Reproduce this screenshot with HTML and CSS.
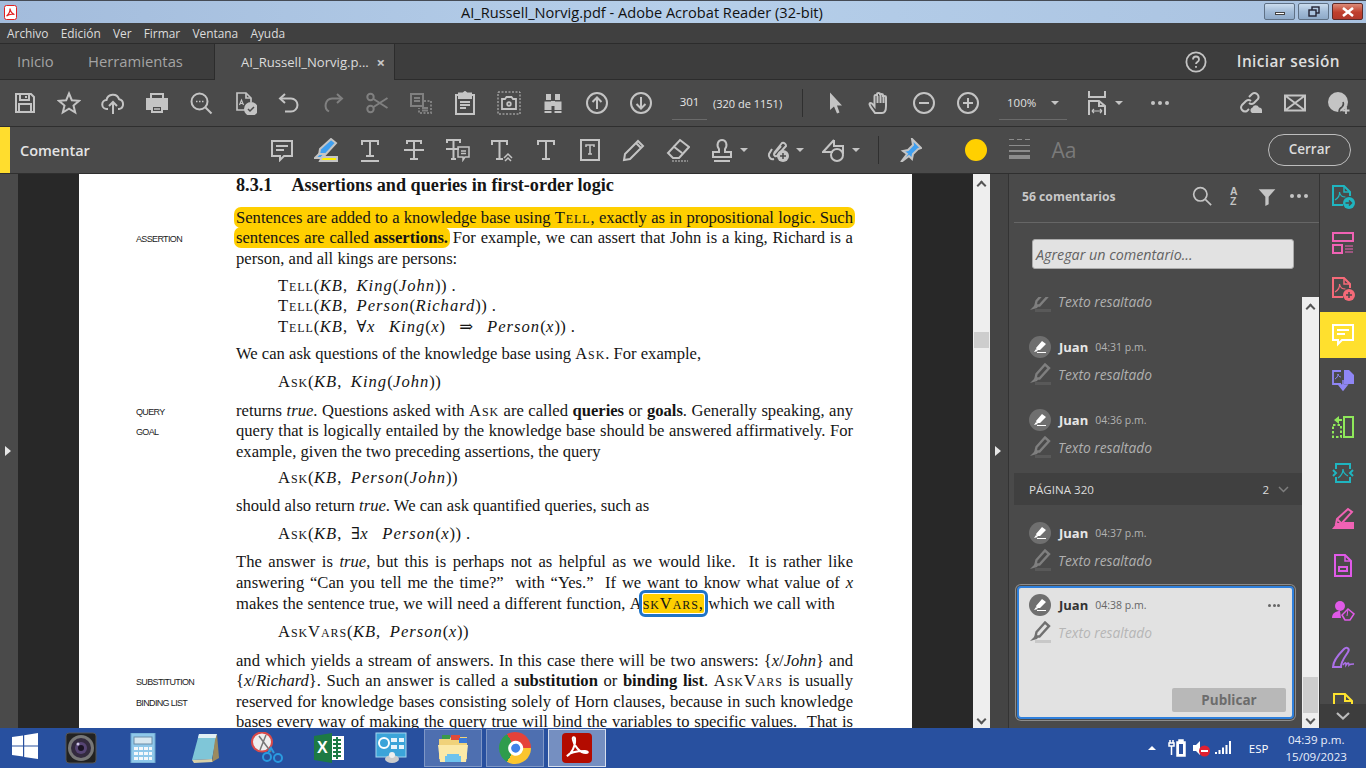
FILE: index.html
```html
<!DOCTYPE html>
<html>
<head>
<meta charset="utf-8">
<title>AI_Russell_Norvig.pdf - Adobe Acrobat Reader (32-bit)</title>
<link rel="stylesheet" href="styles.css">
</head>
<body>

<div class="titlebar">
  <svg class="app-ico" width="13" height="15" viewBox="0 0 13 15"><rect x="0.5" y="0.5" width="12" height="14" rx="2" fill="#fff" stroke="#e02020"/><path d="M2.5 11c2-1 4-5 3.5-7.5C6 5.500 8 9 10.500 9.500 8 9 4.500 9.500 2.500 11z" fill="none" stroke="#e02020" stroke-width="1.200"/></svg>
  <div class="title-text">AI_Russell_Norvig.pdf - Adobe Acrobat Reader (32-bit)</div>
  <div class="winbtns">
    <div class="winbtn"><span class="win-min"></span></div>
    <div class="winbtn"><svg width="12" height="11" viewBox="0 0 12 11" fill="none" stroke="#223" stroke-width="1.400"><rect x="4" y="1" width="7" height="6"/><rect x="1" y="4" width="7" height="6" fill="#a9c2de"/></svg></div>
    <div class="winbtn win-close"><svg width="14" height="10" viewBox="0 0 14 10" stroke="#fff" stroke-width="2.600"><path d="M2 1l10 8M12 1L2 9"/></svg></div>
  </div>
</div>

<div class="menubar">
  <span>Archivo</span><span>Edición</span><span>Ver</span><span>Firmar</span><span>Ventana</span><span>Ayuda</span>
</div>

<div class="tabs">
  <span class="tab-link first">Inicio</span>
  <span class="tab-link">Herramientas</span>
  <div class="tab-doc"><span>AI_Russell_Norvig.p...</span><b>×</b></div>
  <svg class="help" width="22" height="22" viewBox="0 0 22 22" fill="none" stroke="#c4c4c4" stroke-width="1.800"><circle cx="11" cy="11" r="9.600"/><path d="M8 8.500c0-4 6-4 6 0 0 2.500-3 2.500-3 4.500"/><path d="M11 15v1.800"/></svg>
  <span class="login">Iniciar sesión</span>
</div>

<div class="toolbar">
  <div class="cell"><svg class="ic" viewBox="0 0 24 24"><path d="M3 3h15l3 3v15H3z"/><path d="M7 3v6h9V3M6 21v-8h12v8"/><path d="M13 5v2"/></svg></div>
  <div class="cell"><svg class="ic" viewBox="0 0 24 24"><path d="M12 2.500l2.800 6.700 7.200.6-5.500 4.700 1.700 7-6.200-3.800-6.200 3.800 1.700-7L2 9.800l7.200-.6z"/></svg></div>
  <div class="cell"><svg class="ic" viewBox="0 0 24 24"><path d="M7 18H6a4.500 4.500 0 0 1-.5-9 6.500 6.500 0 0 1 12.600-.8A5 5 0 0 1 18 18h-1"/><path d="M12 23V11M8 15l4-4 4 4"/></svg></div>
  <div class="cell"><svg class="ic" viewBox="0 0 24 24"><path class="solid" d="M2 8h20a1 1 0 0 1 0 0v10h-4v-4H6v4H2z"/><path d="M6 7V3h12v4M7 15h10v6H7z"/><path d="M9 18h6" stroke-width="1.500"/></svg></div>
  <div class="cell"><svg class="ic" viewBox="0 0 24 24"><circle cx="10.500" cy="10.500" r="8"/><path d="M16.500 16.500l6 6"/><path d="M7 10.500h1.500M10 10.500h1.500M13 10.500h1.500" stroke-width="1.500"/></svg></div>
  <div class="cell"><svg class="ic" viewBox="0 0 24 24"><path d="M15 19H4V2h9l5 5v4" stroke-width="1.700"/><path d="M13 2v5h5" stroke-width="1.700"/><circle class="solid" cx="18" cy="18" r="6"/><path d="M15 18l2 2 4-4" stroke="#4a4a4a" stroke-width="1.500"/><path d="M6.500 14l2-5 2 5M7 12.500h3" stroke-width="1.200"/></svg></div>
  <div class="cell"><svg class="ic" viewBox="0 0 24 24"><path d="M8 3L3 7.500 8 12"/><path d="M3 7.500h11a6.500 6.500 0 0 1 0 13H8"/></svg></div>
  <div class="cell dim"><svg class="ic" viewBox="0 0 24 24"><path d="M16 3l5 4.500L16 12"/><path d="M21 7.500H11a7 7 0 0 0-3 13"/></svg></div>
  <div class="cell dim"><svg class="ic" viewBox="0 0 24 24"><circle cx="5.500" cy="6" r="3.200"/><circle cx="5.500" cy="18" r="3.200"/><path d="M8.500 8l14 9M8.500 16l14-9"/></svg></div>
  <div class="cell dim"><svg class="ic" viewBox="0 0 24 24" stroke-width="1.400"><path d="M2 3h12v12H2zM5 7h6M5 10h6"/><path d="M15 10h7v12H10v-5" stroke-dasharray="2 1.500"/><path d="M13 17h6M13 19.500h6"/></svg></div>
  <div class="cell"><svg class="ic" viewBox="0 0 24 24" stroke-width="1.700"><path d="M5 4H3v19h18V4h-2"/><path d="M6 7V2.500h4l2-1.500 2 1.500h4V7z" class="solid"/><path d="M7 11h10M7 14h10M7 17h6"/></svg></div>
  <div class="cell"><svg class="ic" viewBox="0 0 24 24" stroke-width="1.500"><path d="M1 1h22v22H1z" stroke-dasharray="2 1.500" stroke-width="1"/><path d="M5 8h3l1.500-2h5L16 8h3v10H5z" stroke-width="1.800"/><circle cx="12" cy="13" r="1.800" stroke-width="1.800"/></svg></div>
  <div class="cell"><svg class="ic solidfill" viewBox="0 0 24 24"><path d="M5 3h5v6H5zM14 3h5v6h-5zM3.500 10.500h7V19h-7zM13.500 10.500h7V19h-7zM10 10h4v5h-4zM3.500 20h7v2h-7zM13.500 20h7v2h-7z"/></svg></div>
  <div class="cell"><svg class="ic" viewBox="0 0 24 24"><circle cx="12" cy="12" r="10"/><path d="M12 18V7M7.500 11L12 6.500l4.500 4.500"/></svg></div>
  <div class="cell"><svg class="ic" viewBox="0 0 24 24"><circle cx="12" cy="12" r="10"/><path d="M12 6v11M7.500 13l4.500 4.500 4.500-4.500"/></svg></div>

  <div class="pagebox">301</div>
  <div class="pagecount">(320 de 1151)</div>
  <div class="tb-sep"></div>

  <div class="cell"><svg class="ic solidfill" viewBox="0 0 24 24"><path d="M6 1.500l12 13h-5l2.500 7-2.500 1-3-7-4 3.500z"/></svg></div>
  <div class="cell"><svg class="ic" viewBox="0 0 24 24" stroke-width="1.700"><path d="M7 22c-2-3-5-6-5.500-9 0-1.500 2-1.500 3 0l2 2.500V5c0-1.500 2.500-1.500 2.500 0V3c0-1.500 3-1.500 3 0v1c0-1.500 3-1.500 3 0v2c0-1.500 3-1.500 3 0v9c0 4-1.500 7-4 7z"/><path d="M9.500 5v7M12.500 4v8M15.500 6v6"/></svg></div>
  <div class="cell"><svg class="ic" viewBox="0 0 24 24"><circle cx="12" cy="12" r="10"/><path d="M7 12h10"/></svg></div>
  <div class="cell"><svg class="ic" viewBox="0 0 24 24"><circle cx="12" cy="12" r="10"/><path d="M7 12h10M12 7v10"/></svg></div>

  <div class="zoombox"><span>100%</span><i class="caret"></i></div>

  <div class="fit"><svg class="ic" viewBox="0 0 24 24" stroke-width="1.700"><path d="M4 0v6h16V0"/><path d="M4 24V10h10l6 5v9"/><path d="M14 10v5h6"/><path d="M7 20h10M7 20l2-2M7 20l2 2M17 20l-2-2M17 20l-2 2" stroke-width="1.200"/></svg><i class="caret"></i></div>
  <div class="dots3 more"><i></i><i></i><i></i></div>

  <div class="tb-right">
    <div class="cell"><svg class="ic" viewBox="0 0 24 24"><path d="M10 6l3-3a4 4 0 0 1 6 5l-4 4a4 4 0 0 1-5 0"/><path d="M12 10a4 4 0 0 0-5 0l-4 4a4 4 0 0 0 5 6l2-2"/><path class="solid" d="M13 22a3 3 0 0 1 .5-5.500 3.500 3.500 0 0 1 6.500 0 3 3 0 0 1 3 2.800V22z" stroke="none"/></svg></div>
    <div class="cell"><svg class="ic" viewBox="0 0 24 24" stroke-width="1.600"><path d="M2 4.500h20v15H2zM2 4.500l20 15M22 4.500l-20 15"/></svg></div>
    <div class="cell"><svg class="ic" viewBox="0 0 24 24"><circle class="solid" cx="11" cy="11" r="10" stroke="none"/><path d="M12 21c0-3 1-4 3-5 1-1 2-3 1-5" stroke="#4a4a4a" stroke-width="1.500"/><path d="M19 16v7M15.500 19.500h7" stroke-width="1.800"/></svg></div>
  </div>
</div>

<div class="commentbar">
  <div class="cm-flag"></div>
  <div class="cm-title">Comentar</div>
  <div class="cell"><svg class="ic" viewBox="0 0 24 24"><path d="M2 3h20v15h-8l-4 4v-4H2z"/><path d="M6 8h12M6 12h8"/></svg></div>
  <div class="cell"><svg class="ic" viewBox="0 0 24 24" stroke="none"><path d="M17 1l5 4L11 17H5l1-6z" fill="#3f9ff0"/><path d="M5 16h5l-2 4H1z" fill="#3f9ff0"/><path d="M8 19h15v4H6z" fill="#ffef00"/></svg></div>
  <div class="cell"><svg class="ic" viewBox="0 0 24 24"><path d="M4 7V3h16v4M12 3v15M8 18h8M3 23h18"/></svg></div>
  <div class="cell"><svg class="ic" viewBox="0 0 24 24"><path d="M5 6V3h14v3M12 3v18M8 21h8M2 12h20"/></svg></div>
  <div class="cell"><svg class="ic" viewBox="0 0 24 24"><path d="M1 5V2h13v3M7.500 2v19M5 21h5M0 11h13"/><path d="M12 9h11v10h-4l-2 3v-3h-5zM15 13h5M15 15.500h5" stroke-width="1.500"/></svg></div>
  <div class="cell"><svg class="ic" viewBox="0 0 24 24"><path d="M2 7V3h15v4M9.500 3v18M6 21h7"/><path d="M14 20l4-4 4 4M15 23l3-3 3 3" stroke-width="1.500"/></svg></div>
  <div class="cell"><svg class="ic" viewBox="0 0 24 24"><path d="M4 7V3h16v4M12 3v18M8 21h8"/></svg></div>
  <div class="cell"><svg class="ic" viewBox="0 0 24 24"><path d="M3 2h18v20H3z"/><path d="M8 9V7h8v2M12 7v9M10 16h4" stroke-width="1.600"/></svg></div>
  <div class="cell"><svg class="ic" viewBox="0 0 24 24"><path d="M16 3l5 5L8 21l-6 1 1-6zM14 5l5 5"/></svg></div>
  <div class="cell"><svg class="ic" viewBox="0 0 24 24"><path d="M14 2l9 7-10 11H7l-5-5zM7 8l9 7"/><path d="M6 23h16" stroke-dasharray="2 1" stroke-width="1"/></svg></div>
  <div class="cell drop stamp"><svg class="ic" viewBox="0 0 24 24"><path d="M9 11C6 7 8 2 12 2s6 5 3 9v3h6v5H3v-5h6zM4 23h16"/></svg><i class="caret"></i></div>
  <div class="cell drop"><svg class="ic" viewBox="0 0 24 24"><path d="M8 15L16 5a3 3 0 0 1 4 3L11 18a2 2 0 0 1-3-2l7-8"/><path d="M6 11l-3 5a4 4 0 0 0 5 5"/><circle class="solid" cx="17" cy="18" r="6" stroke="none"/><path d="M14 18h6M17 15v6" stroke="#4a4a4a" stroke-width="1.500"/></svg><i class="caret"></i></div>
  <div class="cell drop"><svg class="ic" viewBox="0 0 24 24"><path d="M12 2L1 14h10"/><path d="M12 2v6h9v8"/><circle cx="15" cy="17" r="6"/></svg><i class="caret"></i></div>
  <div class="tb-sep cm-sep"></div>
  <div class="cell pin"><svg class="ic" viewBox="0 0 24 24" stroke="none"><path d="M14 1l9 9-3 1-5 5-1 5-3-3-8 6 6-8-4-3 5-1 5-5z" fill="#3f9ff0"/></svg></div>
  <div class="color-dot"></div>
  <div class="cell lines"><svg width="22" height="22" viewBox="0 0 22 22" fill="#8c8c8c"><path d="M0 0h5v1H0zM8 0h5v1H8zM16 0h5v1h-5zM0 6h21v1H0zM0 11h21v2H0zM0 16h21v4H0z"/></svg></div>
  <div class="aa">Aa</div>
  <div class="close-btn">Cerrar</div>
</div>

<div class="main">
  <div class="edge"><i class="tri"></i></div>

  <div class="doc">
    <div class="page">
      <div class="ln head"><div class="side"></div><div class="txt end"><b>8.3.1</b><b class="head-t">Assertions and queries in first-order logic</b></div></div>

      <div class="para first">
        <div class="ln"><div class="side"></div><div class="txt"><span class="hl">Sentences are added to a knowledge base using <span class="sc">Tell</span>, exactly as in propositional logic. Such</span></div></div>
        <div class="ln"><div class="side">ASSERTION</div><div class="txt"><span class="hl">sentences are called <b>assertions.</b></span> For example, we can assert that John is a king, Richard is a</div></div>
        <div class="ln"><div class="side"></div><div class="txt end">person, and all kings are persons:</div></div>
      </div>

      <div class="para near eq">
        <div class="ln"><span class="sc">Tell</span>(<i>KB</i>, &nbsp;<i>King</i>(<i>John</i>)) .</div>
        <div class="ln"><span class="sc">Tell</span>(<i>KB</i>, &nbsp;<i>Person</i>(<i>Richard</i>)) .</div>
        <div class="ln"><span class="sc">Tell</span>(<i>KB</i>, &nbsp;∀ <i>x</i> &nbsp;&nbsp;&nbsp;<i>King</i>(<i>x</i>) &nbsp;&nbsp;⇒ &nbsp;&nbsp;<i>Person</i>(<i>x</i>)) .</div>
      </div>

      <div class="para near">
        <div class="ln"><div class="side"></div><div class="txt end">We can ask questions of the knowledge base using <span class="sc">Ask</span>. For example,</div></div>
      </div>

      <div class="para eq">
        <div class="ln"><span class="sc">Ask</span>(<i>KB</i>, &nbsp;<i>King</i>(<i>John</i>))</div>
      </div>

      <div class="para far">
        <div class="ln"><div class="side">QUERY</div><div class="txt">returns <i>true</i>. Questions asked with <span class="sc">Ask</span> are called <b>queries</b> or <b>goals</b>. Generally speaking, any</div></div>
        <div class="ln"><div class="side">GOAL</div><div class="txt">query that is logically entailed by the knowledge base should be answered affirmatively. For</div></div>
        <div class="ln"><div class="side"></div><div class="txt end">example, given the two preceding assertions, the query</div></div>
      </div>

      <div class="para near eq">
        <div class="ln"><span class="sc">Ask</span>(<i>KB</i>, &nbsp;<i>Person</i>(<i>John</i>))</div>
      </div>

      <div class="para">
        <div class="ln"><div class="side"></div><div class="txt end">should also return <i>true</i>. We can ask quantified queries, such as</div></div>
      </div>

      <div class="para eq">
        <div class="ln"><span class="sc">Ask</span>(<i>KB</i>, &nbsp;∃ <i>x</i> &nbsp;&nbsp;&nbsp;<i>Person</i>(<i>x</i>)) .</div>
      </div>

      <div class="para">
        <div class="ln"><div class="side"></div><div class="txt">The answer is <i>true</i>, but this is perhaps not as helpful as we would like. &nbsp;It is rather like</div></div>
        <div class="ln"><div class="side"></div><div class="txt">answering “Can you tell me the time?” &nbsp;with “Yes.” &nbsp;If we want to know what value of <i>x</i></div></div>
        <div class="ln"><div class="side"></div><div class="txt end fn-line">makes the sentence true, we will need a different function, <span class="sc">A<span class="focus">skVars,</span></span> which we call with</div></div>
      </div>

      <div class="para eq">
        <div class="ln"><span class="sc">AskVars</span>(<i>KB</i>, &nbsp;<i>Person</i>(<i>x</i>))</div>
      </div>

      <div class="para far">
        <div class="ln"><div class="side"></div><div class="txt">and which yields a stream of answers. In this case there will be two answers: {<i>x</i>/<i>John</i>} and</div></div>
        <div class="ln"><div class="side">SUBSTITUTION</div><div class="txt">{<i>x</i>/<i>Richard</i>}. Such an answer is called a <b>substitution</b> or <b>binding list</b>. <span class="sc">AskVars</span> is usually</div></div>
        <div class="ln"><div class="side">BINDING LIST</div><div class="txt">reserved for knowledge bases consisting solely of Horn clauses, because in such knowledge</div></div>
        <div class="ln"><div class="side"></div><div class="txt">bases every way of making the query true will bind the variables to specific values. &nbsp;That is</div></div>
      </div>
    </div>
  </div>

  <div class="vscroll doc-scroll">
    <i class="arrow up"></i>
    <div class="thumb"></div>
    <i class="arrow down"></i>
  </div>

  <div class="edge edge-r"><i class="tri"></i></div>

  <div class="panel">
    <div class="panel-head">
      <span class="panel-count">56 comentarios</span>
      <svg class="ic search" viewBox="0 0 24 24"><circle cx="10" cy="10" r="8"/><path d="M16 16l7 7"/></svg>
      <span class="az">A<br>Z</span>
      <svg class="ic filter" viewBox="0 0 24 24"><path class="solid" stroke="none" d="M2 4h20l-8 9v9l-4 2V13z"/></svg>
      <div class="dots3"><i></i><i></i><i></i></div>
    </div>
    <div class="add-box"><div class="add-input">Agregar un comentario...</div></div>

    <div class="list-wrap">
      <div class="list">
        <div class="item cut">
          <div class="note"><svg class="marker" viewBox="0 0 22 22"><path d="M16 1.500l4 3.500-9.500 10.500H6.500l1-4.500z" fill="none" stroke="#7f7f7f" stroke-width="2.400"/><path d="M1 20l5-5h4l-2 3z" fill="#7f7f7f"/><path d="M6 19h16v3H6z" fill="#595959"/></svg><span>Texto resaltado</span></div>
        </div>
        <div class="item">
          <div class="who"><span class="avatar"><svg width="14" height="14" viewBox="0 0 14 14" fill="#fff"><path d="M9 1l4 3-6 6H4l-1-2zM1 12l2-3 2 2zM4 12h9v1H4z"/></svg></span><b>Juan</b><span class="time">04:31 p.m.</span></div>
          <div class="note"><svg class="marker" viewBox="0 0 22 22"><path d="M16 1.500l4 3.500-9.500 10.500H6.500l1-4.500z" fill="none" stroke="#7f7f7f" stroke-width="2.400"/><path d="M1 20l5-5h4l-2 3z" fill="#7f7f7f"/><path d="M6 19h16v3H6z" fill="#595959"/></svg><span>Texto resaltado</span></div>
        </div>
        <div class="item">
          <div class="who"><span class="avatar"><svg width="14" height="14" viewBox="0 0 14 14" fill="#fff"><path d="M9 1l4 3-6 6H4l-1-2zM1 12l2-3 2 2zM4 12h9v1H4z"/></svg></span><b>Juan</b><span class="time">04:36 p.m.</span></div>
          <div class="note"><svg class="marker" viewBox="0 0 22 22"><path d="M16 1.500l4 3.500-9.500 10.500H6.500l1-4.500z" fill="none" stroke="#7f7f7f" stroke-width="2.400"/><path d="M1 20l5-5h4l-2 3z" fill="#7f7f7f"/><path d="M6 19h16v3H6z" fill="#595959"/></svg><span>Texto resaltado</span></div>
        </div>

        <div class="page-group">
          <span>PÁGINA 320</span>
          <span class="group-n">2</span>
          <svg width="11" height="7" viewBox="0 0 11 7" fill="none" stroke="#7e7e7e" stroke-width="1.500"><path d="M1 1l4.500 4.500L10 1"/></svg>
        </div>

        <div class="item">
          <div class="who"><span class="avatar"><svg width="14" height="14" viewBox="0 0 14 14" fill="#fff"><path d="M9 1l4 3-6 6H4l-1-2zM1 12l2-3 2 2zM4 12h9v1H4z"/></svg></span><b>Juan</b><span class="time">04:37 p.m.</span></div>
          <div class="note"><svg class="marker" viewBox="0 0 22 22"><path d="M16 1.500l4 3.500-9.500 10.500H6.500l1-4.500z" fill="none" stroke="#7f7f7f" stroke-width="2.400"/><path d="M1 20l5-5h4l-2 3z" fill="#7f7f7f"/><path d="M6 19h16v3H6z" fill="#595959"/></svg><span>Texto resaltado</span></div>
        </div>

        <div class="card">
          <div class="who"><span class="avatar"><svg width="14" height="14" viewBox="0 0 14 14" fill="#fff"><path d="M9 1l4 3-6 6H4l-1-2zM1 12l2-3 2 2zM4 12h9v1H4z"/></svg></span><b>Juan</b><span class="time">04:38 p.m.</span><div class="dots3 small"><i></i><i></i><i></i></div></div>
          <div class="note"><svg class="marker" viewBox="0 0 22 22"><path d="M16 1.500l4 3.500-9.500 10.500H6.500l1-4.500z" fill="none" stroke="#707070" stroke-width="2.400"/><path d="M1 20l5-5h4l-2 3z" fill="#707070"/><path d="M6 19h16v3H6z" fill="#c8c8c8"/></svg><span>Texto resaltado</span></div>
          <div class="publish">Publicar</div>
        </div>
      </div>
      <div class="vscroll list-scroll">
        <i class="arrow up"></i>
        <div class="thumb"></div>
        <i class="arrow down"></i>
      </div>
    </div>
  </div>

  <div class="rail">
    <div class="rail-cell"><svg class="ri" viewBox="0 0 24 24" stroke="#1fb5c0"><path d="M12 20H2V1h11l6 6v4"/><path d="M13 1v6h6" stroke-width="1.500"/><path d="M4 15c3-2 5-5 4.500-8 .5 3 3 5 6 5" stroke-width="1.200"/><circle cx="18" cy="18" r="6" fill="#1fb5c0" stroke="none"/><path d="M14.500 18h6M18 15.500l2.500 2.500-2.500 2.500" stroke="#4a4a4a" stroke-width="1.500"/></svg></div>
    <div class="rail-cell"><svg class="ri" viewBox="0 0 24 24" stroke="#f062b4"><path d="M2 2h20v8H2zM2 14h9v8H2z"/><path d="M14 15h8M14 18h8M14 21h8" stroke-width="1.200"/></svg></div>
    <div class="rail-cell"><svg class="ri" viewBox="0 0 24 24" stroke="#f56a78"><path d="M12 20H2V1h11l6 6v4"/><path d="M13 1v6h6" stroke-width="1.500"/><path d="M4 15c3-2 5-5 4.500-8 .5 3 3 5 6 5" stroke-width="1.200"/><circle cx="18" cy="18" r="6" fill="#f56a78" stroke="none"/><path d="M15 18h6M18 15v6" stroke="#4a4a4a" stroke-width="1.500"/></svg></div>
    <div class="rail-cell on"><svg class="ri" viewBox="0 0 24 24" stroke="#fff"><path d="M2 2h20v15H11l-4 4v-4H2z"/><path d="M6 7h12M6 11h8"/></svg></div>
    <div class="rail-cell"><svg class="ri" viewBox="0 0 24 24" stroke="#8f86f5"><path d="M10 2H2v13h8" stroke-width="1.800"/><path d="M4 10c2-1 3-3 3-5 0 2 2 3 3 3" stroke-width="1"/><path d="M13 1h5l5 5v9H13z" fill="#8f86f5" stroke="none"/><path d="M12 11v6M8 16h8l-4 5z" fill="#8f86f5" stroke="#8f86f5" stroke-width="1.500"/></svg></div>
    <div class="rail-cell"><svg class="ri" viewBox="0 0 24 24" stroke="#8fe85a"><path d="M13 2h9v20h-9z"/><path d="M2 10h8v12H2z" stroke-dasharray="2.500 2"/><path d="M3 5l5-4v3h3v2H8v3z" fill="#8fe85a" stroke="none"/></svg></div>
    <div class="rail-cell"><svg class="ri" viewBox="0 0 24 24" stroke="#1fb5c0"><path d="M5 8V3h14v5M19 16v5H5v-5"/><path d="M2 9l3 3-3 3M22 9l-3 3 3 3"/><path d="M7 17c3-2 5-5 5-9 0 4 3 6 5 7" stroke-width="1.300"/></svg></div>
    <div class="rail-cell"><svg class="ri" viewBox="0 0 24 24" stroke="#f062b4"><path d="M17 2l4 3-11 12H5l1-5z"/><path d="M6 12l5 5"/><path d="M1 22l4-5h5l3-2 10 0v7z" fill="#f062b4" stroke="none"/></svg></div>
    <div class="rail-cell"><svg class="ri" viewBox="0 0 24 24" stroke="#e05ae8"><path d="M4 2h10l6 6v15H4z"/><path d="M14 2v6h6" stroke-width="1.500"/><path d="M8 14h8v4H8z"/></svg></div>
    <div class="rail-cell"><svg class="ri" viewBox="0 0 24 24" stroke="#e05ae8"><circle cx="9" cy="7" r="5" fill="#e05ae8" stroke="none"/><path d="M1 19c0-5 4-7 8-7l1 7z" fill="#e05ae8" stroke="none"/><path d="M14 21l-3-5 6-6 6 5-4 6z" stroke-width="1.500"/><path d="M17 10l-1 7" stroke-width="1"/></svg></div>
    <div class="rail-cell"><svg class="ri" viewBox="0 0 24 24" stroke="#ac70e8"><path d="M2 22c0-5 6-13 11-18 3-3 6 0 4 3-3 5-7 9-7 15zM2 22h8"/><path d="M12 20c2-3 3-3 3 0 2-3 3-2 3 0 1-1 3-1 5-1" stroke-width="1.600"/></svg></div>
    <div class="rail-cell"><svg class="ri" viewBox="0 0 24 24" stroke="#fde22f"><path d="M3 24V3h11l7 7v14"/><path d="M14 3v7h7"/></svg></div>
    <div class="rail-more"><svg width="14" height="8" viewBox="0 0 14 8" fill="none" stroke="#bcbcbc" stroke-width="2.200"><path d="M1 1l6 5.500L13 1"/></svg></div>
  </div>
</div>

<div class="taskbar">
  <div class="start"><svg width="26" height="26" viewBox="0 0 26 26" fill="#fff"><path d="M0 4l11-1.600V12.400H0zM12.200 2.200L26 0v12.400H12.200zM0 13.600h11V23.600L0 22zM12.200 13.600H26V26l-13.800-2z"/></svg></div>

  <div class="task"><svg width="32" height="32" viewBox="0 0 32 32"><rect x="1" y="1" width="30" height="30" rx="3" fill="#222" stroke="#555"/><circle cx="16" cy="16" r="13" fill="#777"/><circle cx="16" cy="16" r="10" fill="#332a3e"/><circle cx="16" cy="16" r="6" fill="#564474"/><circle cx="16" cy="16" r="3" fill="#1a1224"/><circle cx="13" cy="12" r="1.500" fill="#cfc7e8"/></svg></div>
  <div class="task"><svg width="26" height="30" viewBox="0 0 26 30"><rect x="1" y="0" width="24" height="30" fill="#8fc8ea" stroke="#6aa5cc"/><rect x="4" y="4" width="18" height="7" fill="#d8e8f0" stroke="#6d8ea8"/><g fill="#f4f8fb"><rect x="4" y="14" width="4" height="3"/><rect x="9" y="14" width="4" height="3"/><rect x="14" y="14" width="4" height="3"/><rect x="19" y="14" width="3" height="3"/><rect x="4" y="19" width="4" height="3"/><rect x="9" y="19" width="4" height="3"/><rect x="14" y="19" width="4" height="3"/><rect x="19" y="19" width="3" height="3"/><rect x="4" y="24" width="4" height="3"/><rect x="9" y="24" width="4" height="3"/><rect x="14" y="24" width="4" height="3"/><rect x="19" y="24" width="3" height="3"/></g></svg></div>
  <div class="task"><svg width="32" height="32" viewBox="0 0 32 32"><path d="M10 2h18l-5 25-20 1z" fill="#7fc6d8"/><path d="M10 2h18l-1 4H9z" fill="#e0eff4"/><path d="M3 28l20-1 1 3-19 1z" fill="#d8d0a8"/><path d="M26 8l2-6 2 24-7 4z" fill="#9b8a5f"/></svg></div>
  <div class="task"><svg width="32" height="32" viewBox="0 0 32 32"><ellipse cx="11" cy="10" rx="10" ry="9.500" fill="#eee" stroke="#d84a4a" stroke-width="2"/><path d="M8 4l12 16M15 3L9 18" stroke="#777" stroke-width="1.500"/><circle cx="16" cy="25" r="4" fill="none" stroke="#2a9be0" stroke-width="2"/><circle cx="27" cy="26" r="4" fill="none" stroke="#2a9be0" stroke-width="2"/><path d="M17 21l3-5 3 5" stroke="#2a9be0" stroke-width="2" fill="none"/></svg></div>
  <div class="task"><svg width="32" height="32" viewBox="0 0 32 32"><path d="M17 4h14v24H17z" fill="#fff"/><path d="M20 8h8M20 12h8M20 16h8M20 20h8M20 24h8M24 5v22" stroke="#1d7a44" stroke-width="2"/><path d="M1 4l18-3v30L1 28z" fill="#1d7a44"/><text x="4" y="21" class="xl">X</text></svg></div>
  <div class="task"><svg width="32" height="32" viewBox="0 0 32 32"><rect x="1" y="1" width="30" height="24" fill="#3ba4d9" stroke="#a5d5ef"/><circle cx="9" cy="11" r="5" fill="none" stroke="#fff" stroke-width="2"/><path d="M16 6h6v4h-6zM24 6h5v4h-5zM16 13h6v4h-6zM24 13h5v4h-5z" fill="#e8f4fb"/><ellipse cx="17" cy="27" rx="7" ry="4" fill="#ccc"/><circle cx="17" cy="23" r="3" fill="#eee"/></svg></div>
  <div class="task open"><svg width="32" height="32" viewBox="0 0 32 32"><path d="M2 7h10l2-2h16v22H2z" fill="#f0d27a"/><path d="M5 3h8v4H5z" fill="#3a9a4a"/><path d="M14 3h9v5h-9z" fill="#e04a3a"/><path d="M22 6h8v5h-8z" fill="#3a7ad8"/><path d="M1 13h30l-2 17H3z" fill="#fbe9a8"/><path d="M10 22h12v2h2v6H8v-6h2z" fill="#6ec3ee"/></svg></div>
  <div class="task open"><div class="chrome"><i></i></div></div>
  <div class="task open now"><svg width="32" height="32" viewBox="0 0 32 32"><rect x="1" y="1" width="30" height="30" rx="4" fill="#b30b00"/><path d="M6 24c4-2 9-10 8-17 0-3-3-2-2 1 1 6 7 13 13 13 3 0 2-2-1-2-6 0-15 1-18 5z" fill="none" stroke="#fff" stroke-width="2"/></svg></div>

  <div class="tray">
    <i class="tray-up"></i>
    <svg class="tray-batt" width="18" height="18" viewBox="0 0 18 18" fill="none" stroke="#fff" stroke-width="1.500"><path d="M2 1v3M5 1v3M1 4h5v3H1zM3.500 7v9" /><rect x="9" y="3" width="8" height="14" fill="#fff"/><rect x="11" y="1" width="4" height="2" fill="#fff"/><rect x="11" y="5" width="4" height="10" fill="#2a509f" stroke="none"/></svg>
    <svg class="tray-vol" width="18" height="18" viewBox="0 0 18 18"><path d="M1 6h3l4-4v14l-4-4H1z" fill="#fff"/><circle cx="12.500" cy="12" r="5.500" fill="#e02030"/><path d="M9 12h7" stroke="#fff" stroke-width="2"/></svg>
    <svg class="tray-net" width="16" height="14" viewBox="0 0 16 14" fill="#fff"><path d="M0 11h2v2H0zM3.500 9h2v4h-2zM7 6.500h2V13H7zM10.500 4h2v9h-2zM14 0h2v13h-2z"/></svg>
    <span class="lang">ESP</span>
    <div class="clock">04:39 p.m.<br>15/09/2023</div>
  </div>
</div>

</body>
</html>
```

FILE: styles.css
```css
*{
    margin:0;
    padding:0;
    box-sizing:border-box;
}
html,body{
    width:1366px;
    height:768px;
    overflow:hidden;
}
body{
    display:flex;
    flex-direction:column;
    background:#4a4a4a;
    font-family:"Open Sans","Liberation Sans",sans-serif;
    color:#ddd;
}

/* window title */
.titlebar{
    height:23px;
    display:flex;
    align-items:center;
    position:relative;
    border-top:1px solid #454b55;
    background:linear-gradient(90deg,#a3bcdc 0%,#b6cfea 50%,#a9c2e0 100%);
    flex:none;
}
.app-ico{
    margin-left:4px;
}
.title-text{
    position:absolute;
    left:461px;
    top:1px;
    font-size:14.6px;
    line-height:20px;
    color:#111;
    white-space:nowrap;
}
.winbtns{
    margin-left:auto;
    margin-right:3px;
    display:flex;
    gap:3px;
    margin-top:2px;
    align-self:flex-start;
}
.winbtn{
    width:31px;
    height:17px;
    display:flex;
    align-items:center;
    justify-content:center;
    border:1px solid #5f7186;
    border-radius:2px;
    background:linear-gradient(#cbdcee,#a3bcd8 50%,#8ea9c8);
}
.win-min{
    width:10px;
    height:3px;
    margin-top:3px;
    background:#fff;
    border:1px solid #444;
}
.win-close{
    border-color:#5e2a28;
    background:linear-gradient(#dc8a78,#c0402e 55%,#b2392c);
}

/* menu */
.menubar{
    height:21px;
    padding-left:7px;
    display:flex;
    align-items:center;
    gap:12.2px;
    font-size:11.9px;
    color:#dcdcdc;
    background:#404040;
    border-bottom:1px solid #2c2c2c;
    flex:none;
}

/* tabs */
.tabs{
    height:36px;
    display:flex;
    align-items:center;
    background:#3d3d3d;
    border-bottom:1px solid #2c2c2c;
    flex:none;
}
.tab-link{
    width:126px;
    padding-bottom:1px;
    font-size:14.8px;
    color:#a4a4a4;
}
.tab-link.first{
    width:71px;
    margin-left:17px;
}
.tab-doc{
    width:181px;
    height:36px;
    padding-left:26px;
    padding-right:9px;
    display:flex;
    align-items:center;
    justify-content:space-between;
    font-size:13.1px;
    color:#dcdcdc;
    background:#4a4a4a;
    border-left:1px solid #2c2c2c;
    border-right:1px solid #2c2c2c;
}
.tab-doc b{
    font-size:15px;
    color:#c8c8c8;
}
.help{
    margin-left:auto;
}
.login{
    margin:0 26px 0 30px;
    font-size:15.4px;
    font-weight:600;
    letter-spacing:0.4px;
    color:#dedede;
}

/* shared icons */
.ic{
    width:24px;
    height:24px;
    fill:none;
    stroke:currentColor;
    stroke-width:2;
    flex:none;
}
.ic .solid{
    fill:currentColor;
}
.ic.solidfill{
    fill:currentColor;
    stroke:none;
}
.cell{
    width:44px;
    height:100%;
    display:flex;
    align-items:center;
    justify-content:center;
    color:#c4c4c4;
    flex:none;
}
.cell.dim{
    color:#808080;
}
.caret{
    width:0;
    height:0;
    margin-left:6px;
    border-left:4px solid transparent;
    border-right:4px solid transparent;
    border-top:4px solid #c4c4c4;
    flex:none;
}
.dots3{
    display:flex;
    gap:3px;
}
.dots3 i{
    width:4px;
    height:4px;
    border-radius:50%;
    background:#c4c4c4;
}

/* main toolbar */
.toolbar{
    height:47px;
    padding-left:3px;
    display:flex;
    align-items:center;
    background:#4a4a4a;
    border-bottom:1px solid #2f2f2f;
    flex:none;
}
.pagebox{
    width:35px;
    height:34px;
    margin-left:9px;
    line-height:32px;
    text-align:center;
    font-size:11.5px;
    color:#e6e6e6;
    border-bottom:1px solid #6a6a6a;
}
.pagecount{
    width:75px;
    margin-left:6px;
    font-size:11px;
    color:#e6e6e6;
    white-space:nowrap;
}
.tb-sep{
    width:1px;
    height:28px;
    margin-left:14px;
    margin-right:11px;
    background:#2f2f2f;
    flex:none;
}
.zoombox{
    width:68px;
    height:34px;
    margin-left:9px;
    padding-left:8px;
    padding-right:8px;
    display:flex;
    align-items:center;
    justify-content:space-between;
    font-size:11.5px;
    color:#e0e0e0;
    border-bottom:1px solid #6a6a6a;
}
.fit{
    margin-left:18px;
    display:flex;
    align-items:center;
    color:#c4c4c4;
}
.more{
    margin-left:28px;
}
.tb-right{
    margin-left:auto;
    margin-right:5px;
    height:100%;
    display:flex;
}

/* comment toolbar */
.commentbar{
    height:47px;
    display:flex;
    align-items:center;
    background:#4a4a4a;
    border-bottom:1px solid #2f2f2f;
    flex:none;
}
.cm-flag{
    width:10px;
    height:100%;
    background:#ffdd2e;
}
.cm-title{
    width:250px;
    padding-left:10px;
    font-size:14.5px;
    font-weight:600;
    color:#e4e4e4;
}
.cell.drop{
    width:56px;
    padding-left:12px;
    justify-content:flex-start;
}
.cell.drop.stamp{
    width:54px;
    padding-left:10px;
}
.cm-sep{
    margin-left:12px;
    margin-right:15px;
}
.pin{
    width:32px;
}
.color-dot{
    width:22px;
    height:22px;
    margin-left:39px;
    border-radius:50%;
    background:#ffd000;
    flex:none;
}
.lines{
    margin-left:11px;
}
.aa{
    width:44px;
    text-align:center;
    font-size:21px;
    color:#7a7a7a;
}
.close-btn{
    width:83px;
    height:32px;
    margin-left:auto;
    margin-right:15px;
    line-height:28px;
    text-align:center;
    font-size:13.5px;
    font-weight:600;
    color:#dcdcdc;
    border:1px solid #bdbdbd;
    border-radius:16px;
}

/* document area */
.main{
    height:554px;
    display:flex;
    overflow:hidden;
    flex:none;
}
.edge{
    width:18px;
    display:flex;
    align-items:center;
    justify-content:center;
    padding-right:3px;
    background:#4a4a4a;
    flex:none;
}
.edge-r{
    width:19px;
    background:#444;
    border-right:1px solid #333;
}
.tri{
    width:0;
    height:0;
    border-top:5px solid transparent;
    border-bottom:5px solid transparent;
    border-left:6px solid #e6e6e6;
}
.doc{
    width:955px;
    background:#282828;
    overflow:hidden;
    flex:none;
}
.page{
    width:833px;
    height:560px;
    margin-left:61px;
    padding-left:57px;
    padding-top:1px;
    background:#fff;
    font-family:"Liberation Serif","DejaVu Serif",serif;
    font-size:16.6px;
    color:#151515;
}
.ln{
    height:20.6px;
    line-height:20.6px;
    display:flex;
    white-space:nowrap;
}
.head{
    font-size:18.2px;
}
.head-t{
    margin-left:19px;
}
.side{
    width:100px;
    padding-top:1px;
    font-family:"Liberation Sans",sans-serif;
    font-size:9px;
    letter-spacing:-0.65px;
    color:#222;
    flex:none;
}
.txt{
    width:617px;
    white-space:normal;
    text-align:justify;
    text-align-last:justify;
    flex:none;
}
.txt.end{
    text-align-last:left;
}
.fn-line{
    word-spacing:0.25px;
}
.para{
    margin-top:7.4px;
}
.para.first{
    margin-top:12px;
}
.para.near{
    margin-top:6.2px;
}
.para.far{
    margin-top:8.4px;
}
.eq{
    padding-left:142px;
    letter-spacing:0.4px;
}
.eq i{
    letter-spacing:1px;
}
.sc{
    font-variant:small-caps;
    letter-spacing:0.9px;
}
.hl{
    margin:0 -2px;
    padding:1px 2px;
    background:#ffcf00;
    border-radius:7px;
}
.focus{
    background:#ffcf00;
    outline:3px solid #1f74c8;
    outline-offset:1px;
    border-radius:2px;
}

/* scrollbars */
.vscroll{
    display:flex;
    flex-direction:column;
    align-items:center;
    background:#eeeeee;
    flex:none;
}
.doc-scroll{
    width:17px;
}
.list-scroll{
    width:17px;
}
.arrow{
    width:7px;
    height:7px;
    border-left:2px solid #555;
    border-top:2px solid #555;
    flex:none;
}
.arrow.up{
    margin-top:8px;
    transform:rotate(45deg);
}
.arrow.down{
    margin-bottom:5px;
    transform:rotate(225deg);
}
.doc-scroll .thumb{
    width:15px;
    height:16px;
    margin-top:143px;
    margin-bottom:auto;
    background:#cdcdcd;
}
.list-scroll .thumb{
    width:15px;
    height:36px;
    margin-top:auto;
    margin-bottom:3px;
    background:#cdcdcd;
}

/* comments panel */
.panel{
    width:310px;
    display:flex;
    flex-direction:column;
    background:#4a4a4a;
    flex:none;
}
.panel-head{
    height:49px;
    margin-left:5px;
    padding-left:8px;
    padding-bottom:4px;
    display:flex;
    align-items:center;
    color:#c4c4c4;
    border-bottom:1px solid #666;
    flex:none;
}
.panel-head .ic{
    width:20px;
    height:20px;
}
.panel-count{
    width:170px;
    font-size:12.2px;
    font-weight:700;
    color:#c8c8c8;
}
.az{
    width:10px;
    margin-left:18px;
    font-family:"Liberation Sans",sans-serif;
    font-size:10.5px;
    font-weight:700;
    line-height:10px;
}
.panel-head .filter{
    margin-left:17px;
}
.panel-head .dots3{
    margin-left:13px;
    margin-right:8px;
}
.add-box{
    height:74px;
    padding:16px 25px 0 23px;
    flex:none;
}
.add-input{
    height:30px;
    padding-left:3px;
    line-height:29px;
    font-size:14.3px;
    font-style:italic;
    color:#636363;
    background:#e2e2e2;
    border:1px solid #aaa;
    border-radius:3px;
    white-space:nowrap;
}
.list-wrap{
    height:431px;
    margin-left:5px;
    display:flex;
    flex:none;
}
.list{
    width:288px;
    overflow:hidden;
    flex:none;
}
.item{
    padding-left:15px;
    margin-bottom:24px;
}
.item.cut{
    margin-top:-12px;
}
.who{
    height:22px;
    display:flex;
    align-items:center;
    font-size:13px;
}
.who b{
    margin-left:8px;
    color:#e6e6e6;
}
.time{
    margin-left:7px;
    font-size:10.5px;
    color:#b2b2b2;
}
.avatar{
    width:22px;
    height:22px;
    display:flex;
    align-items:center;
    justify-content:center;
    border-radius:50%;
    background:#6f6f6f;
    flex:none;
}
.note{
    height:22px;
    margin-top:5px;
    display:flex;
    align-items:center;
    font-size:13.8px;
    font-style:italic;
    color:#b0b0b0;
}
.marker{
    width:22px;
    height:22px;
    margin-right:7px;
    flex:none;
}
.page-group{
    height:32px;
    margin-top:-9px;
    margin-bottom:17px;
    padding:0 13px 0 15px;
    display:flex;
    align-items:center;
    font-size:11.6px;
    color:#dcdcdc;
    background:#404040;
}
.group-n{
    margin-left:auto;
    margin-right:9px;
    font-size:11.5px;
}
.card{
    width:277px;
    height:133px;
    margin-top:-9px;
    margin-left:3px;
    padding:6px 6px 5px 10px;
    display:flex;
    flex-direction:column;
    background:#e2e2e2;
    border:2px solid #2f80dc;
    border-radius:4px;
    box-shadow:0 0 0 1px #4a4a4a,0 0 0 2px #8c8c8c;
}
.card .who b{
    color:#333;
}
.card .time{
    color:#666;
}
.card .note{
    color:#b6b6b6;
}
.dots3.small{
    margin-left:auto;
    margin-right:6px;
    gap:1.5px;
}
.dots3.small i{
    width:3px;
    height:3px;
    background:#666;
}
.publish{
    width:114px;
    height:24px;
    margin-top:auto;
    margin-left:auto;
    line-height:24px;
    text-align:center;
    font-size:13.5px;
    font-weight:700;
    color:#6c6c6c;
    background:#b8b8b8;
    border-radius:2px;
}

/* tool rail */
.rail{
    width:47px;
    position:relative;
    overflow:hidden;
    background:#4a4a4a;
    border-left:1px solid #333;
    flex:none;
}
.rail-cell{
    width:46px;
    height:46px;
    display:flex;
    align-items:center;
    justify-content:center;
}
.rail-cell.on{
    background:#ffe02e;
}
.ri{
    width:24px;
    height:24px;
    fill:none;
    stroke-width:2;
}
.rail-more{
    position:absolute;
    left:0;
    right:0;
    bottom:0;
    height:24px;
    display:flex;
    align-items:center;
    justify-content:center;
    background:#3d3d3d;
}

/* windows taskbar */
.taskbar{
    height:40px;
    display:flex;
    align-items:center;
    background:#28509f;
    flex:none;
}
.start{
    width:50px;
    padding-left:12px;
    flex:none;
}
.task{
    width:62px;
    height:100%;
    display:flex;
    align-items:center;
    justify-content:center;
    flex:none;
}
.task.open{
    width:58px;
    height:38px;
    margin:0 2px;
    background:rgba(255,255,255,0.18);
    border:1px solid rgba(255,255,255,0.28);
}
.task.now{
    background:rgba(255,255,255,0.36);
    border-color:rgba(255,255,255,0.7);
}
.xl{
    font-family:"Liberation Sans",sans-serif;
    font-size:16px;
    font-weight:700;
    fill:#fff;
}
.chrome{
    width:32px;
    height:32px;
    display:flex;
    align-items:center;
    justify-content:center;
    border-radius:50%;
    background:conic-gradient(#e5423a 0 120deg,#fbc52e 120deg 240deg,#2e9c4c 240deg 360deg);
    transform:rotate(-30deg);
}
.chrome i{
    width:15px;
    height:15px;
    border-radius:50%;
    background:#3f82e8;
    border:3px solid #fff;
}
.tray{
    margin-left:auto;
    margin-right:19px;
    display:flex;
    align-items:center;
}
.tray-up{
    width:0;
    height:0;
    border-left:4px solid transparent;
    border-right:4px solid transparent;
    border-bottom:4px solid #fff;
}
.tray-batt{
    margin-left:12px;
}
.tray-vol{
    margin-left:6px;
}
.tray-net{
    margin-left:5px;
}
.lang{
    margin:0 17px 0 18px;
    font-size:11.5px;
    color:#fff;
}
.clock{
    font-size:11.6px;
    line-height:17px;
    text-align:center;
    color:#e8eefa;
}
```
